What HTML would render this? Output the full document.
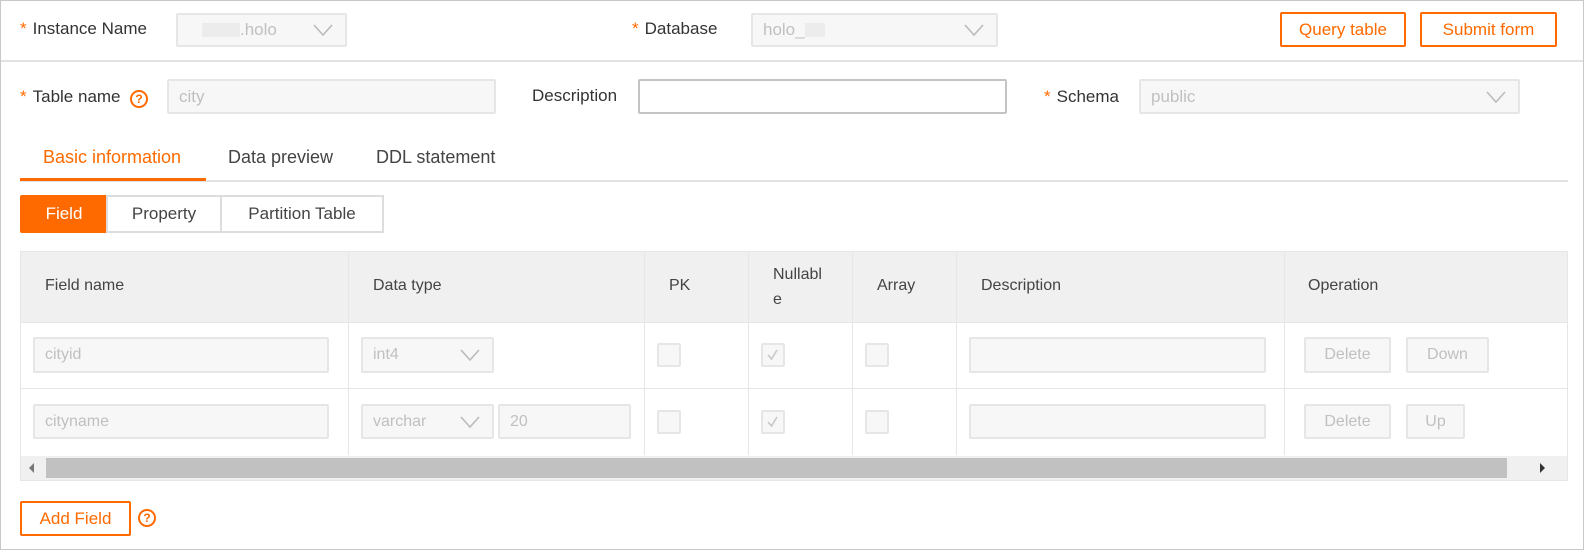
<!DOCTYPE html>
<html><head><meta charset="utf-8"><style>
*{box-sizing:border-box;margin:0;padding:0}
body{width:1584px;height:556px;background:#fff;font-family:"Liberation Sans",sans-serif;font-size:17px;color:#333;position:relative;overflow:hidden}
.a{position:absolute}
.lbl{position:absolute;line-height:20px;color:#333}
.lbl b{color:#ff6a00;font-weight:normal;margin-right:6px}
.in{position:absolute;border:2px solid #e6e6e6;background:#f7f7f7;border-radius:2px;color:#c0c0c0;padding-left:10px;display:flex;align-items:center}
.chev{position:absolute;right:12px;top:50%;width:20px;height:12px;margin-top:-6px}
.btn{position:absolute;border:2px solid #ff6a00;border-radius:2px;color:#ff6a00;display:flex;align-items:center;justify-content:center;background:#fff}
.q{position:absolute;width:18px;height:18px;border:2px solid #ff6a00;border-radius:50%;color:#ff6a00;font-size:12px;font-weight:bold;line-height:14px;text-align:center}
.th{position:absolute;color:#444;line-height:22px;font-size:16px}
.cb{position:absolute;width:24px;height:24px;border:2px solid #e6e6e6;background:#f7f7f7;border-radius:2px}
.vl{position:absolute;width:1px;background:#e6e6e6}
.hl{position:absolute;height:1px;background:#e6e6e6}
.gb{position:absolute;border:2px solid #e6e6e6;background:#f7f7f7;border-radius:2px;color:#c0c0c0;display:flex;align-items:center;justify-content:center;font-size:16px}
.tb{font-size:16px}
</style></head><body>
<div class="a" style="left:0;top:0;width:1584px;height:550px;border:1px solid #c8c8c8"></div>
<div class="hl" style="left:1px;top:60px;width:1582px;height:2px;background:#e2e2e2"></div>

<div class="lbl" style="left:20px;top:19px"><b>*</b>Instance Name</div>
<div class="in" style="left:176px;top:13px;width:171px;height:34px"><span style="display:inline-block;width:38px;height:14px;background:#ececec;margin-left:14px"></span>.holo<svg class="chev" viewBox="0 0 20 12"><path d="M1 1L10 11L19 1" fill="none" stroke="#bbb" stroke-width="1.6"/></svg></div>
<div class="lbl" style="left:632px;top:19px"><b>*</b>Database</div>
<div class="in" style="left:751px;top:13px;width:247px;height:34px">holo_<span style="display:inline-block;width:20px;height:14px;background:#ececec"></span><svg class="chev" viewBox="0 0 20 12"><path d="M1 1L10 11L19 1" fill="none" stroke="#bbb" stroke-width="1.6"/></svg></div>
<div class="btn" style="left:1280px;top:12px;width:126px;height:35px">Query table</div>
<div class="btn" style="left:1420px;top:12px;width:137px;height:35px">Submit form</div>

<div class="lbl" style="left:20px;top:87px"><b>*</b>Table name</div>
<div class="q" style="left:130px;top:90px">?</div>
<div class="in" style="left:167px;top:79px;width:329px;height:35px">city</div>
<div class="lbl" style="left:532px;top:86px">Description</div>
<div class="a" style="left:638px;top:79px;width:369px;height:35px;border:2px solid #c4c4c4;border-radius:2px"></div>
<div class="lbl" style="left:1044px;top:87px"><b>*</b>Schema</div>
<div class="in" style="left:1139px;top:79px;width:381px;height:35px">public<svg class="chev" viewBox="0 0 20 12"><path d="M1 1L10 11L19 1" fill="none" stroke="#bbb" stroke-width="1.6"/></svg></div>

<div class="lbl" style="left:43px;top:147px;color:#ff6a00;font-size:18px">Basic information</div>
<div class="lbl" style="left:228px;top:147px;color:#444;font-size:18px">Data preview</div>
<div class="lbl" style="left:376px;top:147px;color:#444;font-size:18px">DDL statement</div>
<div class="hl" style="left:20px;top:180px;width:1548px;height:2px;background:#e2e2e2"></div>
<div class="a" style="left:20px;top:178px;width:186px;height:3px;background:#ff6a00"></div>

<div class="a" style="left:20px;top:195px;width:88px;height:38px;background:#ff6a00;color:#fff;display:flex;align-items:center;justify-content:center;border-radius:2px 0 0 2px">Field</div>
<div class="a" style="left:106px;top:195px;width:116px;height:38px;border:2px solid #ddd;display:flex;align-items:center;justify-content:center;color:#444">Property</div>
<div class="a" style="left:220px;top:195px;width:164px;height:38px;border:2px solid #ddd;display:flex;align-items:center;justify-content:center;color:#444">Partition Table</div>

<!-- table -->
<div class="a" style="left:20px;top:251px;width:1548px;height:230px;border:1px solid #e6e6e6"></div>
<div class="a" style="left:21px;top:252px;width:1546px;height:70px;background:#f0f0f0"></div>
<div class="hl" style="left:21px;top:322px;width:1546px"></div>
<div class="hl" style="left:21px;top:388px;width:1546px"></div>
<div class="vl" style="left:348px;top:252px;height:203px"></div>
<div class="vl" style="left:644px;top:252px;height:203px"></div>
<div class="vl" style="left:748px;top:252px;height:203px"></div>
<div class="vl" style="left:852px;top:252px;height:203px"></div>
<div class="vl" style="left:956px;top:252px;height:203px"></div>
<div class="vl" style="left:1284px;top:252px;height:203px"></div>
<div class="th" style="left:45px;top:275px">Field name</div>
<div class="th" style="left:373px;top:275px">Data type</div>
<div class="th" style="left:669px;top:275px">PK</div>
<div class="th" style="left:773px;top:262px;line-height:25px">Nullabl<br>e</div>
<div class="th" style="left:877px;top:275px">Array</div>
<div class="th" style="left:981px;top:275px">Description</div>
<div class="th" style="left:1308px;top:275px">Operation</div>

<div class="in tb" style="left:33px;top:337px;width:296px;height:36px">cityid</div>
<div class="in tb" style="left:361px;top:337px;width:133px;height:36px">int4<svg class="chev" viewBox="0 0 20 12"><path d="M1 1L10 11L19 1" fill="none" stroke="#bbb" stroke-width="1.6"/></svg></div>
<div class="cb" style="left:657px;top:343px"></div>
<div class="cb" style="left:761px;top:343px"><svg width="20" height="20" viewBox="0 0 20 20"><path d="M5 10L8.5 14L14 5" fill="none" stroke="#c8c8c8" stroke-width="1.6"/></svg></div>
<div class="cb" style="left:865px;top:343px"></div>
<div class="in" style="left:969px;top:337px;width:297px;height:36px"></div>
<div class="gb" style="left:1304px;top:337px;width:87px;height:36px">Delete</div>
<div class="gb" style="left:1406px;top:337px;width:83px;height:36px">Down</div>

<div class="in tb" style="left:33px;top:404px;width:296px;height:35px">cityname</div>
<div class="in tb" style="left:361px;top:404px;width:133px;height:35px">varchar<svg class="chev" viewBox="0 0 20 12"><path d="M1 1L10 11L19 1" fill="none" stroke="#bbb" stroke-width="1.6"/></svg></div>
<div class="in tb" style="left:498px;top:404px;width:133px;height:35px">20</div>
<div class="cb" style="left:657px;top:410px"></div>
<div class="cb" style="left:761px;top:410px"><svg width="20" height="20" viewBox="0 0 20 20"><path d="M5 10L8.5 14L14 5" fill="none" stroke="#c8c8c8" stroke-width="1.6"/></svg></div>
<div class="cb" style="left:865px;top:410px"></div>
<div class="in" style="left:969px;top:404px;width:297px;height:35px"></div>
<div class="gb" style="left:1304px;top:404px;width:87px;height:35px">Delete</div>
<div class="gb" style="left:1406px;top:404px;width:59px;height:35px">Up</div>

<!-- scrollbar -->
<div class="a" style="left:21px;top:456px;width:1546px;height:24px;background:#f0f0f0"></div>
<div class="a" style="left:46px;top:458px;width:1461px;height:20px;background:#c1c1c1"></div>
<div class="a" style="left:29px;top:463px;width:0;height:0;border-top:5px solid transparent;border-bottom:5px solid transparent;border-right:5px solid #777"></div>
<div class="a" style="left:1540px;top:463px;width:0;height:0;border-top:5px solid transparent;border-bottom:5px solid transparent;border-left:5px solid #333"></div>

<div class="btn" style="left:20px;top:501px;width:111px;height:35px">Add Field</div>
<div class="q" style="left:138px;top:509px">?</div>
</body></html>
